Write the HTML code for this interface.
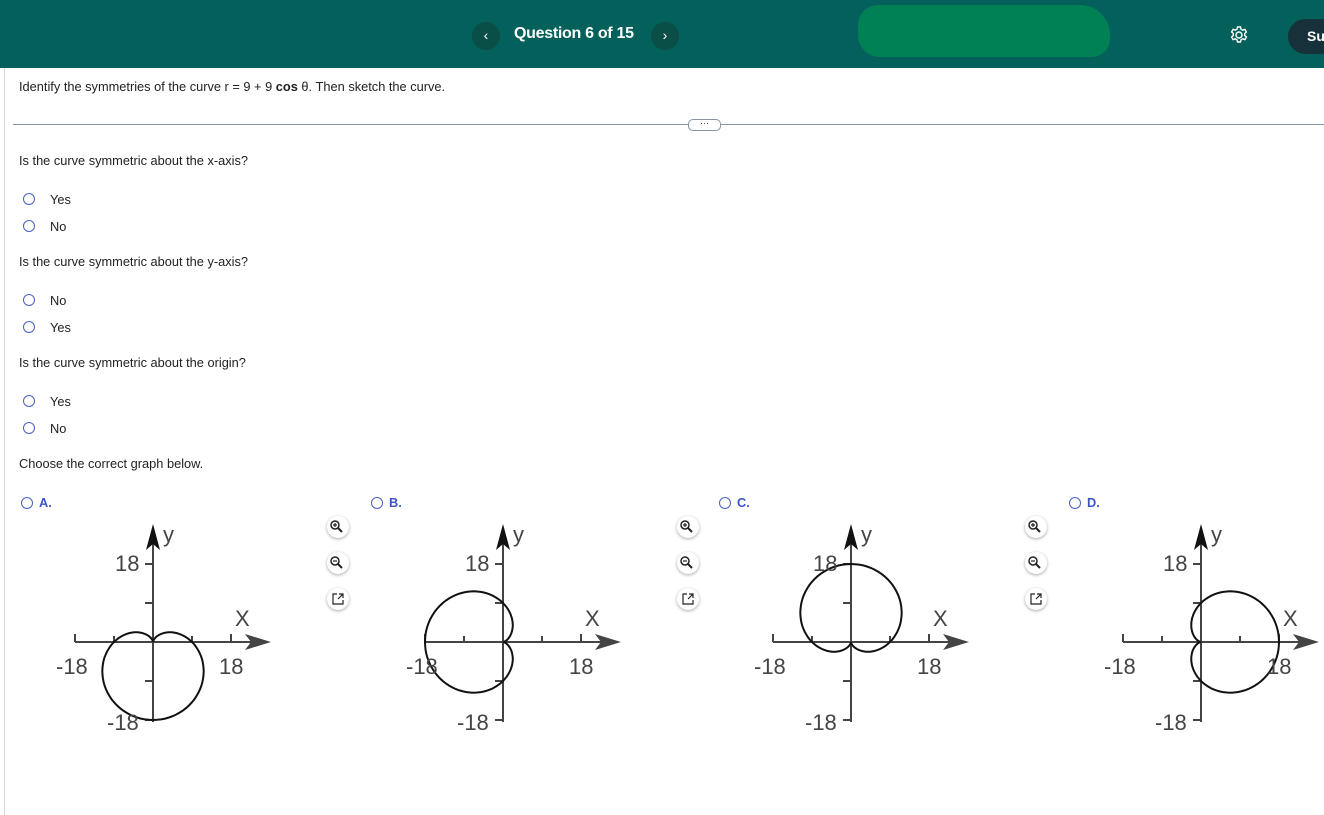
<!DOCTYPE html>
<html><head><meta charset="utf-8"><style>
body{margin:0;width:1324px;height:815px;overflow:hidden;background:#fff;font-family:"Liberation Sans",Arial,sans-serif;color:#222;position:relative}
.hdr{position:absolute;left:0;top:0;width:1324px;height:68px;background:#03605a;overflow:hidden}
.t{position:absolute;font-size:12.8px;white-space:nowrap}
.r{position:absolute;width:12px;height:12px;border:1px solid #4a5fc4;border-radius:50%;box-sizing:border-box}
.zb{position:absolute;width:22px;height:22px;border-radius:50%;background:#fff;box-shadow:0 1px 3px rgba(0,0,0,.35)}
svg text{font-family:"Liberation Sans",Arial,sans-serif}
</style></head><body>
<div class="hdr">
 <div style="position:absolute;left:472px;top:22px;width:28px;height:28px;border-radius:50%;background:#0b4d47;color:#fff;text-align:center;line-height:27px;font-size:14px">‹</div>
 <div style="position:absolute;left:514px;top:25px;color:#fff;font-weight:bold;font-size:16px;letter-spacing:-0.3px">Question 6 of 15</div>
 <div style="position:absolute;left:651px;top:22px;width:28px;height:28px;border-radius:50%;background:#0b4d47;color:#fff;text-align:center;line-height:27px;font-size:14px">›</div>
 <div style="position:absolute;left:858px;top:5px;width:252px;height:52px;background:#008055;border-radius:20px 30px 18px 22px"></div>
 <svg style="position:absolute;left:1229px;top:25px" width="20" height="20" viewBox="0 0 20 20"><circle cx="10" cy="10" r="3" fill="none" stroke="#fff" stroke-width="1.5"/><path d="M8.5 2h3l.5 2.2 1.8 1 2.1-.8 1.5 2.6-1.7 1.5v2l1.7 1.5-1.5 2.6-2.1-.8-1.8 1-.5 2.2h-3l-.5-2.2-1.8-1-2.1.8-1.5-2.6 1.7-1.5v-2L2.6 7l1.5-2.6 2.1.8 1.8-1z" fill="none" stroke="#fff" stroke-width="1.4"/></svg>
 <div style="position:absolute;left:1288px;top:19px;width:36px;height:35px;border-radius:18px 0 0 18px;background:#17313a;color:#fff;font-weight:bold;font-size:14px;line-height:35px;padding-left:19px;box-sizing:border-box;overflow:hidden">Su</div>
</div>
<div style="position:absolute;left:4px;top:68px;width:1px;height:747px;background:#d5d9e0"></div>
<div class="t" style="left:19px;top:79px">Identify the symmetries of the curve r = 9 + 9 <b>cos</b> θ. Then sketch the curve.</div>
<div style="position:absolute;left:13px;top:124px;width:1311px;height:1px;background:#8a93a0"></div>
<div style="position:absolute;left:688px;top:119px;width:31px;height:10px;border:1px solid #8a93a0;border-radius:5px;background:#fff;font-size:9px;line-height:6px;text-align:center;color:#333">···</div>
<div class="t" style="left:19px;top:153px">Is the curve symmetric about the x-axis?</div>
<div class="r" style="left:23px;top:193px"></div><div class="t" style="left:50px;top:192px">Yes</div>
<div class="r" style="left:23px;top:220px"></div><div class="t" style="left:50px;top:219px">No</div>
<div class="t" style="left:19px;top:254px">Is the curve symmetric about the y-axis?</div>
<div class="r" style="left:23px;top:294px"></div><div class="t" style="left:50px;top:293px">No</div>
<div class="r" style="left:23px;top:321px"></div><div class="t" style="left:50px;top:320px">Yes</div>
<div class="t" style="left:19px;top:355px">Is the curve symmetric about the origin?</div>
<div class="r" style="left:23px;top:395px"></div><div class="t" style="left:50px;top:394px">Yes</div>
<div class="r" style="left:23px;top:422px"></div><div class="t" style="left:50px;top:421px">No</div>
<div class="t" style="left:19px;top:456px">Choose the correct graph below.</div>
<div id="g"></div>
<script>
var O=[153,503,851,1201],L=["A.","B.","C.","D."],s=78/18,h="";
for(var k=0;k<4;k++){
 var ox=O[k],oy=642,bx=ox-153;
 h+='<div class="r" style="left:'+(bx+21)+'px;top:497px"></div><div class="t" style="left:'+(bx+39)+'px;top:495px;color:#3b55c8;font-weight:bold">'+L[k]+'</div>';
 var zx=bx+327;
 ['M8 7v4M6 9h4','M6 9h4',''].forEach(function(p,i){
  var ic=i<2?'<circle cx="8" cy="9" r="4" fill="none" stroke="#222" stroke-width="1.5"/><path d="M11 12l4 4" stroke="#222" stroke-width="2"/><path d="'+p+'" stroke="#222" stroke-width="1.2"/>':'<path d="M10 6H6v10h10v-4M12 6h4v4M16 6l-5 5" fill="none" stroke="#222" stroke-width="1.2"/>';
  h+='<div class="zb" style="left:'+zx+'px;top:'+(516+i*36)+'px"><svg width="22" height="22">'+ic+'</svg></div>';
 });
 var d="";
 for(var i=0;i<=360;i+=3){var t=i*Math.PI/180,r;
  if(k==0)r=9-9*Math.sin(t);else if(k==1)r=9-9*Math.cos(t);else if(k==2)r=9+9*Math.sin(t);else r=9+9*Math.cos(t);
  d+=(i?'L':'M')+(ox+r*Math.cos(t)*s).toFixed(1)+' '+(oy-r*Math.sin(t)*s).toFixed(1);}
 var sv='<svg style="position:absolute;left:'+(ox-100)+'px;top:515px" width="220" height="220" viewBox="'+(ox-100)+' 515 220 220">';
 sv+='<g stroke="#444" stroke-width="2" fill="none"><path d="M'+(ox-78)+' '+oy+'H'+(ox+105)+'M'+ox+' '+(oy+80)+'V'+(oy-100)+'"/>';
 sv+='<path d="M'+(ox-78)+' '+(oy-8)+'v8M'+(ox-39)+' '+(oy-6)+'v6M'+(ox+39)+' '+(oy-6)+'v6M'+(ox+78)+' '+(oy-8)+'v8M'+(ox-8)+' '+(oy-78)+'h8M'+(ox-8)+' '+(oy-39)+'h8M'+(ox-8)+' '+(oy+39)+'h8M'+(ox-8)+' '+(oy+78)+'h8"/></g>';
 sv+='<path d="M'+(ox+92)+' '+(oy-8)+'L'+(ox+118)+' '+oy+'L'+(ox+92)+' '+(oy+8)+'L'+(ox+98)+' '+oy+'z" fill="#444"/>';
 sv+='<path d="M'+(ox-7)+' '+(oy-92)+'L'+ox+' '+(oy-118)+'L'+(ox+7)+' '+(oy-92)+'L'+ox+' '+(oy-98)+'z" fill="#111"/>';
 sv+='<path d="'+d+'" fill="none" stroke="#111" stroke-width="2"/>';
 sv+='<g fill="#444" font-size="22"><text x="'+(ox-38)+'" y="'+(oy-71)+'">18</text><text x="'+(ox+10)+'" y="'+(oy-100)+'">y</text><text x="'+(ox+82)+'" y="'+(oy-16)+'">X</text><text x="'+(ox-97)+'" y="'+(oy+32)+'">-18</text><text x="'+(ox+66)+'" y="'+(oy+32)+'">18</text><text x="'+(ox-46)+'" y="'+(oy+88)+'">-18</text></g></svg>';
 h+=sv;
}
document.getElementById('g').innerHTML=h;
</script>
</body></html>
